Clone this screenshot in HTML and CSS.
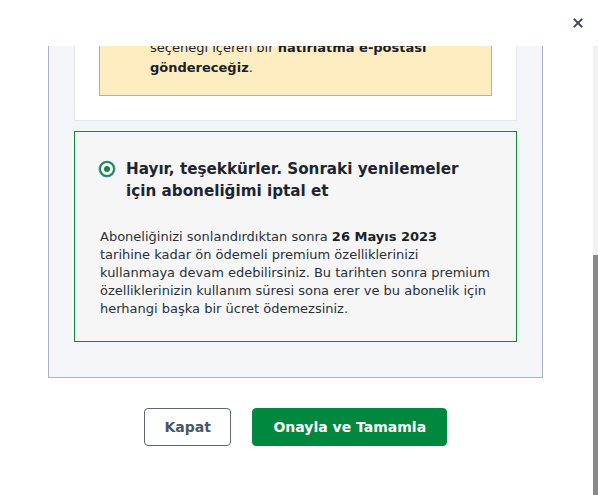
FILE: index.html
```html
<!DOCTYPE html>
<html lang="tr">
<head>
<meta charset="utf-8">
<title>Aboneliği iptal et</title>
<link rel="stylesheet" href="styles.css">
</head>
<body>
<div class="modal">
  <header class="modal-header">
    <button class="close" aria-label="Kapat">
      <svg width="10" height="10" viewBox="0 0 10 10"><path d="M1.5 1.5L8.5 8.5M8.5 1.5L1.5 8.5" stroke="#3b4858" stroke-width="1.9" stroke-linecap="square"/></svg>
    </button>
  </header>
  <div class="scroll-wrap">
    <div class="scroll">
      <div class="scroll-inner">
        <h1 class="page-title">Aboneliğinizi iptal etmek istediğinizden emin misiniz?</h1>
        <section class="panel">
          <h2 class="panel-title">Lütfen bir seçenek belirleyin</h2>
          <div class="option">
            <div class="option-head">
              <span class="radio"></span>
              <span class="option-title">Evet, aboneliğimi sürdürmek istiyorum</span>
            </div>
            <p class="option-text">Premium özelliklerinizi kullanmaya kesintisiz olarak devam edin. Aboneliğiniz her dönem sonunda otomatik olarak yenilenir ve istediğiniz zaman iptal edebilirsiniz.</p>
            <div class="alert">
              <span class="alert-icon">
                <svg width="18" height="18" viewBox="0 0 18 18"><circle cx="9" cy="9" r="8" fill="none" stroke="#7a5b00" stroke-width="1.6"/><path d="M9 8v5M9 5v.5" stroke="#7a5b00" stroke-width="1.8" stroke-linecap="round"/></svg>
              </span>
              <p class="alert-text">Aboneliğiniz otomatik olarak yenilenecek.<br>Yenilemeden önce size iptal etme<br>seçeneği içeren bir <strong>hatırlatma e-postası<br>göndereceğiz</strong>.</p>
            </div>
          </div>
          <div class="option selected">
            <div class="option-head">
              <span class="radio"></span>
              <span class="option-title">Hayır, teşekkürler. Sonraki yenilemeler için aboneliğimi iptal et</span>
            </div>
            <p class="option-text">Aboneliğinizi sonlandırdıktan sonra <strong>26 Mayıs 2023</strong><br>tarihine kadar ön ödemeli premium özelliklerinizi<br>kullanmaya devam edebilirsiniz. Bu tarihten sonra premium<br>özelliklerinizin kullanım süresi sona erer ve bu abonelik için<br>herhangi başka bir ücret ödemezsiniz.</p>
          </div>
        </section>
        <div class="actions">
          <button class="btn btn-secondary">Kapat</button>
          <button class="btn btn-primary">Onayla ve Tamamla</button>
        </div>
      </div>
    </div>
    <div class="scrollbar" aria-hidden="true"><div class="scrollbar-thumb"></div></div>
  </div>
</div>
</body>
</html>
```
FILE: styles.css
```css
*, *::before, *::after { box-sizing: border-box; }
html, body { margin: 0; height: 100%; }
body {
  font-family: "DejaVu Sans", Verdana, sans-serif;
  background: #ffffff;
  color: #1f2633;
}
.modal {
  height: 100vh;
  display: flex;
  flex-direction: column;
}
.modal-header {
  flex: none;
  height: 46px;
  display: flex;
  justify-content: flex-end;
  align-items: center;
  padding: 0 15px 0 0;
}
.close {
  border: 0;
  background: none;
  padding: 0;
  width: 10px;
  height: 10px;
  display: flex;
  cursor: pointer;
}
.scroll-wrap {
  position: relative;
  flex: 1;
  min-height: 0;
  display: flex;
}
.scroll {
  flex: 1;
  min-height: 0;
  overflow-y: auto;
  display: flex;
  flex-direction: column-reverse;
  scrollbar-width: none;
}
.scroll::-webkit-scrollbar { width: 0; }
.scrollbar {
  position: absolute;
  top: 0;
  right: 0;
  bottom: 0;
  width: 5px;
  background: #f1f1f1;
}
.scrollbar-thumb {
  position: absolute;
  left: 0;
  right: 0;
  bottom: 0;
  height: 240px;
  background: #8a8a8a;
}
.scroll-inner {
  padding: 0 55px 49px 48px;
}
.page-title {
  margin: 0 0 40px;
  font-size: 20px;
  line-height: 28px;
  text-align: center;
}
.panel {
  width: 495px;
  background: #f4f5f9;
  border: 1px solid #aab3bd;
  padding: 25px 25px 35px;
}
.panel-title {
  margin: 0 0 20px;
  font-size: 16px;
  line-height: 24px;
}
.option {
  background: #ffffff;
  border: 1px solid #e6e8ed;
  padding: 24px;
}
.option.selected {
  margin-top: 10px;
  background: #f6f6f6;
  border-color: #0d8a3f;
  padding: 26px 24px 23px;
}
.option-head {
  display: flex;
  align-items: flex-start;
  gap: 11px;
}
.radio {
  flex: none;
  width: 16px;
  height: 16px;
  margin-top: 3px;
  border-radius: 50%;
  border: 2px solid #1c8c58;
  box-shadow: 0 0 0 0.6px rgba(70, 120, 200, 0.55);
  background: #ffffff;
  display: grid;
  place-items: center;
}
.selected .radio::after {
  content: "";
  width: 6px;
  height: 6px;
  border-radius: 50%;
  background: #0d8a3f;
}
.option-title {
  font-size: 15.2px;
  font-weight: bold;
  line-height: 22px;
  color: #1e2532;
}
.option-text {
  margin: 26px 0 0;
  padding-left: 1px;
  font-size: 13px;
  line-height: 18px;
  color: #2a303b;
}
.option-text strong { color: #1a1f29; }
.alert {
  margin-top: 20px;
  display: flex;
  background: #ffedc2;
  border: 1px solid #b7af9a;
  padding: 17px 12px 17px 0;
}
.alert-icon {
  flex: none;
  width: 50px;
  display: flex;
  justify-content: center;
  padding-top: 1px;
}
.alert-text {
  margin: 0;
  font-size: 13px;
  line-height: 20px;
  color: #1f2430;
}
.alert-text strong { color: #1a1e28; }
.actions {
  margin-top: 30px;
  display: flex;
  justify-content: center;
  gap: 21px;
  width: 495px;
}
.btn {
  height: 38px;
  border-radius: 4px;
  font-family: "DejaVu Sans", Verdana, sans-serif;
  font-size: 14px;
  font-weight: bold;
  cursor: pointer;
}
.btn-secondary {
  background: #ffffff;
  border: 1px solid #5d6776;
  color: #4a5567;
  padding: 0 19.5px;
}
.btn-primary {
  background: #00893e;
  border: 1px solid #00893e;
  color: #ffffff;
  padding: 0 20px;
}
```
